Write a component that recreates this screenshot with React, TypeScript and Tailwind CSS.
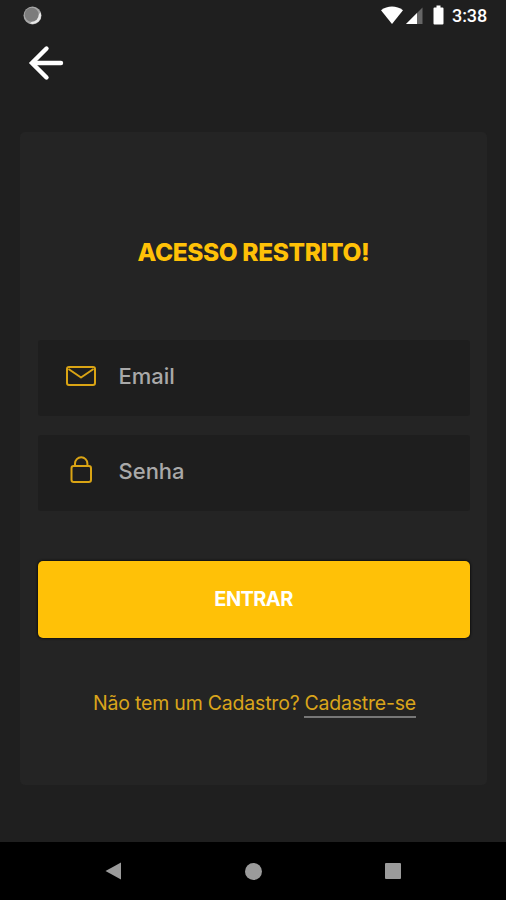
import { useState } from 'react';
import type { ReactNode } from 'react';

function StatusBar() {
  return (
    <div className="flex h-8 shrink-0 items-center justify-between pl-[23px] pr-[18px]">
      <svg className="-mt-0.5" width="19" height="19" viewBox="0 0 19 19">
        <circle cx="9.5" cy="9.5" r="9" fill="#a6a6a6" />
        <path d="M17.5 6.5A8.5 8.5 0 0 1 7 17.5Z" fill="#e8e8e8" />
        <circle cx="8.7" cy="8.7" r="7" fill="#7c7c7c" />
      </svg>
      <div className="flex items-center">
        <svg className="-mt-0.5" width="64" height="20" viewBox="0 0 64 20">
          <path d="M0 5.2C6.5 0.4 15.5 0.4 22 5.2L11 19Z" fill="#fff" />
          <path d="M41.5 2.5V19H25Z" fill="#666" />
          <path d="M36 8V19H25Z" fill="#fff" />
          <path d="M55.5 0.5h4v2h2q1 0 1 1v15q0 1-1 1h-8q-1 0-1-1v-15q0-1 1-1h2Z" fill="#fff" />
        </svg>
        <span className="ml-[7px] w-[36px] whitespace-nowrap font-['Roboto',sans-serif] text-[18px] font-medium leading-5 tracking-[-0.1px] text-white">
          3:38
        </span>
      </div>
    </div>
  );
}

type FieldProps = {
  type: string;
  placeholder: string;
  value: string;
  onChange: (value: string) => void;
  icon: ReactNode;
};

function Field({ type, placeholder, value, onChange, icon }: FieldProps) {
  return (
    <label className="flex h-[76px] items-center rounded-[3px] bg-[#1e1e1e] pl-[28px]">
      <span className="flex w-[30px] justify-center">{icon}</span>
      <input
        type={type}
        placeholder={placeholder}
        value={value}
        onChange={(e) => onChange(e.target.value)}
        className="ml-[23px] w-[300px] bg-transparent pb-1 text-[22px] font-medium leading-7 text-[#a9a9a9] outline-none placeholder:text-[#a9a9a9]"
      />
    </label>
  );
}

export default function App() {
  const [email, setEmail] = useState('');
  const [password, setPassword] = useState('');

  return (
    <div className="flex h-[900px] w-[506px] flex-col overflow-hidden bg-[#1f1f1f] font-['Inter',sans-serif]">
      <StatusBar />

      <header className="flex h-[100px] shrink-0 items-start pl-[28px] pt-[13px]">
        <button aria-label="Voltar">
          <svg width="36" height="36" viewBox="0 0 36 36" fill="none" stroke="#fff" strokeWidth="4.4" strokeLinecap="round" strokeLinejoin="miter">
            <path d="M33 18H5" />
            <path d="M18.5 3.5L4 18L18.5 32.5" />
          </svg>
        </button>
      </header>

      <main className="mx-auto flex h-[653px] w-[467px] shrink-0 flex-col rounded-[5px] bg-[#242424] pl-[18px] pr-[17px]">
        <h1 className="mt-[104px] whitespace-nowrap text-center text-[24.5px] font-extrabold leading-8 tracking-[-0.4px] text-[#ffc107]">
          ACESSO RESTRITO!
        </h1>

        <form className="mt-[72px] flex flex-col" onSubmit={(e) => e.preventDefault()}>
          <div className="flex flex-col gap-[19px]">
            <Field
              type="email"
              placeholder="Email"
              value={email}
              onChange={setEmail}
              icon={
                <svg className="mb-[5px]" width="30" height="20" viewBox="0 0 30 20" fill="none" stroke="#daa414" strokeWidth="2" strokeLinejoin="round">
                  <rect x="1" y="1" width="28" height="18" rx="2" />
                  <path d="M2.5 3L15 11.5L27.5 3" />
                </svg>
              }
            />
            <Field
              type="password"
              placeholder="Senha"
              value={password}
              onChange={setPassword}
              icon={
                <svg className="mb-[6px]" width="22" height="28" viewBox="0 0 22 28" fill="none" stroke="#daa414" strokeWidth="2">
                  <rect x="1.5" y="10" width="19.5" height="16" rx="2.2" />
                  <path d="M5 10V7.5a6.2 6.2 0 0 1 12.4 0V10" />
                </svg>
              }
            />
          </div>

          <button className="mt-[50px] h-[77px] rounded-[5px] bg-[#ffc107] pb-px text-[20px] font-bold tracking-[-0.6px] text-white shadow-[0_0_2px_1px_#111]">
            ENTRAR
          </button>
        </form>

        <p className="mt-[53px] flex justify-center whitespace-nowrap pl-0.5 text-[19.5px] leading-[25px] tracking-[-0.2px] text-[#daa51b]">
          <span>Não tem um Cadastro?</span>
          <a href="#cadastro" className="ml-[5px] border-b-2 border-[#777]">
            Cadastre-se
          </a>
        </p>
      </main>

      <nav className="mt-auto flex h-[58px] shrink-0 items-center justify-between bg-black pl-[105px] pr-[105px]">
        <svg width="17" height="18" viewBox="0 0 17 18" fill="#9b9b9b">
          <path d="M0.5 9L16 0.5V17.5Z" />
        </svg>
        <span className="h-[17px] w-[17px] rounded-full bg-[#9b9b9b]" />
        <span className="h-4 w-4 rounded-[1px] bg-[#9b9b9b]" />
      </nav>
    </div>
  );
}
